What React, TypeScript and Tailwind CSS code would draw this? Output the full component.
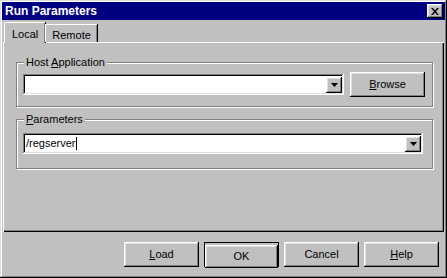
import React from "react";

const raised =
  "shadow-[inset_-1px_-1px_#000,inset_1px_1px_#fff,inset_-2px_-2px_#808080,inset_2px_2px_#dfdfdf]";
const sunken =
  "shadow-[inset_-1px_-1px_#fff,inset_1px_1px_#808080,inset_-2px_-2px_#dfdfdf,inset_2px_2px_#000]";

function DropArrow() {
  return (
    <div className={`w-[16px] h-[16px] bg-[#c0c0c0] flex items-center justify-center ${raised}`}>
      <svg width="7" height="4" viewBox="0 0 7 4">
        <path d="M0 0h7L3.5 4z" fill="#000" />
      </svg>
    </div>
  );
}

function Combo({ width, children }: { width: string; children?: React.ReactNode }) {
  return (
    <div className={`${width} h-[21px] bg-white flex items-center p-[2px] ${sunken}`}>
      <div className="flex-1 flex items-center pl-[1px] text-[11px] text-black">{children}</div>
      <DropArrow />
    </div>
  );
}

function Button({ children, isDefault }: { children: React.ReactNode; isDefault?: boolean }) {
  if (isDefault) {
    return (
      <div className="w-[75px] h-[25px] border border-black">
        <button className={`w-full h-full bg-[#c0c0c0] text-[11px] text-black ${raised}`}>
          {children}
        </button>
      </div>
    );
  }
  return (
    <button className={`w-[75px] h-[25px] bg-[#c0c0c0] text-[11px] text-black ${raised}`}>
      {children}
    </button>
  );
}

function Group({ label, height, children }: { label: React.ReactNode; height: string; children: React.ReactNode }) {
  return (
    <div
      className={`relative ${height} border border-[#808080] shadow-[1px_1px_0_#fff,inset_1px_1px_0_#fff]`}
    >
      <span className="absolute -top-[7px] left-[7px] px-[2px] bg-[#c0c0c0] text-[11px] leading-[13px] text-black">
        {label}
      </span>
      {children}
    </div>
  );
}

export default function App() {
  return (
    <div
      className="w-[447px] h-[278px] bg-[#c0c0c0] p-[2px] flex flex-col shadow-[inset_-1px_-1px_#000,inset_1px_1px_#dfdfdf,inset_-2px_-2px_#808080,inset_2px_2px_#fff]"
      style={{ fontFamily: '"Liberation Sans", Arial, sans-serif' }}
    >
      {/* title bar */}
      <div className="h-[18px] bg-[#000080] flex items-center justify-between pl-[3px] pr-[2px]">
        <span className="text-white text-[12px] font-bold leading-none">Run Parameters</span>
        <div className={`w-[16px] h-[14px] bg-[#c0c0c0] flex items-center justify-center ${raised}`}>
          <svg width="8" height="7" viewBox="0 0 8 7">
            <path d="M0 0h2l2 2.5L6 0h2L5 3.5 8 7H6L4 4.5 2 7H0l3-3.5z" fill="#000" />
          </svg>
        </div>
      </div>

      {/* tabs */}
      <div className="mt-[2px] h-[20px] flex items-end pl-[2px] relative z-10">
        <div className="h-[21px] -mb-[1px] px-[7px] pt-[3px] bg-[#c0c0c0] border-t border-l border-white rounded-tl-[2px] shadow-[inset_-1px_0_#808080,1px_0_#000] text-[11px] text-black">
          Local
        </div>
        <div className="ml-[1px] h-[18px] px-[6px] pt-[2px] bg-[#c0c0c0] border-t border-white shadow-[inset_-1px_0_#808080,1px_0_#000,-1px_0_#fff] text-[11px] text-black">
          Remote
        </div>
      </div>

      {/* tab panel */}
      <div className="h-[190px] ml-[1px] mr-[1px] pt-[20px] pl-[13px] pr-[11px] flex flex-col gap-[12px] shadow-[inset_1px_1px_#fff,inset_-1px_-1px_#000,inset_-2px_-2px_#808080]">
        <Group
          label={
            <>
              Host <u>A</u>pplication
            </>
          }
          height="h-[45px]"
        >
          <div className="flex items-center gap-[6px] pl-[6px] pt-[9px]">
            <Combo width="w-[321px]" />
            <Button>
              <u>B</u>rowse
            </Button>
          </div>
        </Group>
        <Group
          label={
            <>
              <u>P</u>arameters
            </>
          }
          height="h-[50px]"
        >
          <div className="pl-[6px] pt-[13px]">
            <Combo width="w-[400px]">
              <span>/regserver</span>
              <span className="inline-block w-[1px] h-[13px] bg-black" />
            </Combo>
          </div>
        </Group>
      </div>

      {/* bottom buttons */}
      <div className="flex justify-end gap-[5px] pt-[10px] pr-[6px]">
        <Button>
          <u>L</u>oad
        </Button>
        <Button isDefault>OK</Button>
        <Button>Cancel</Button>
        <Button>
          <u>H</u>elp
        </Button>
      </div>
    </div>
  );
}
